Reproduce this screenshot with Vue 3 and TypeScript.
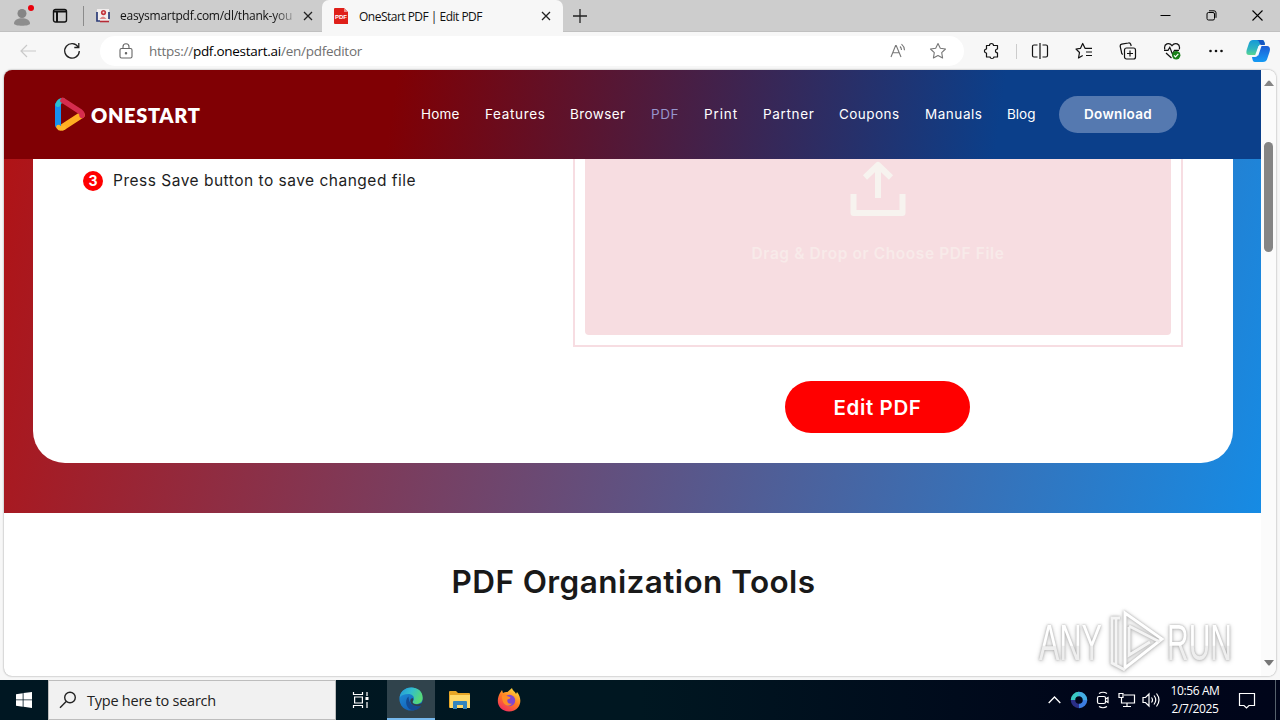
<script setup lang="ts">
import type { Directive } from 'vue'

// Tracks a line of text so that it fills the given width in pixels.
const vTrack: Directive<HTMLElement, number> = {
  mounted(el, { value }) {
    const natural = el.getBoundingClientRect().width
    const count = (el.textContent ?? '').length
    if (count > 0) el.style.letterSpacing = `${(value - natural) / count}px`
  },
}

interface NavItem {
  label: string
  width: number
  active?: boolean
}

const nav: NavItem[] = [
  { label: 'Home', width: 38.5 },
  { label: 'Features', width: 60.5 },
  { label: 'Browser', width: 55.5 },
  { label: 'PDF', width: 28, active: true },
  { label: 'Print', width: 34 },
  { label: 'Partner', width: 51.5 },
  { label: 'Coupons', width: 60.5 },
  { label: 'Manuals', width: 57.5 },
  { label: 'Blog', width: 28.5 },
]
</script>

<template>
  <div class="desktop">
    <div class="tabs">
      <div class="profile">
        <svg width="24" height="24" viewBox="0 0 24 24">
          <circle cx="11" cy="9.500" r="4.500" fill="#858585" />
          <path d="M3 19.500c0-7 16-7 16 0 0 3-16 3-16 0z" fill="#8d8d8d" />
          <circle cx="20" cy="4" r="3" fill="#e9000b" />
        </svg>
      </div>
      <svg class="workspace" width="16" height="16" viewBox="0 0 16 16" fill="none" stroke="#111" stroke-width="1.400">
        <rect x="1.500" y="1.500" width="13" height="12.500" rx="2" />
        <path d="M2 3.500h12M5 4v10" stroke-width="2" />
      </svg>
      <i class="tab-rule"></i>
      <div class="tab idle">
        <svg width="14" height="14" viewBox="0 0 14 14">
          <rect x="1" y="0" width="12" height="12" fill="#f2eeee" />
          <path d="M1 3v9h3M13 3v7" stroke="#2c3c78" stroke-width="1.700" fill="none" />
          <circle cx="7.500" cy="3.600" r="2.600" fill="#c3343c" />
          <circle cx="7.500" cy="3.400" r="1" fill="#f2d5d5" />
          <path d="M3.500 10q3.500-5 7 0" fill="#d88" />
          <path d="M4 12.500h9" stroke="#b52a35" stroke-width="1.600" />
        </svg>
        <span class="tab-text faded"><span v-track="172">easysmartpdf.com/dl/thank-you</span></span>
        <svg class="close" width="10" height="10" viewBox="0 0 10 10"><path d="M1 1l8 8M9 1l-8 8" stroke="#222" stroke-width="1.300" /></svg>
      </div>
      <div class="tab current">
        <svg width="14" height="16" viewBox="0 0 14 16">
          <path d="M1 0h9l4 4v12H1a1 1 0 0 1-1-1V1a1 1 0 0 1 1-1z" fill="#df1f19" />
          <path d="M10 0v4h4z" fill="#f08a85" />
          <text x="7" y="10.500" text-anchor="middle" font-family="Liberation Sans, sans-serif" font-size="6" font-weight="700" fill="#fff">PDF</text>
        </svg>
        <span class="tab-text"><span v-track="123">OneStart PDF | Edit PDF</span></span>
        <svg class="close" width="10" height="10" viewBox="0 0 10 10"><path d="M1 1l8 8M9 1l-8 8" stroke="#222" stroke-width="1.300" /></svg>
      </div>
      <svg class="plus" width="14" height="14" viewBox="0 0 14 14"><path d="M7 0v14M0 7h14" stroke="#222" stroke-width="1.300" /></svg>
      <div class="window-controls">
        <svg width="11" height="11" viewBox="0 0 11 11"><path d="M.5 5.500h10" stroke="#000" /></svg>
        <svg width="11" height="11" viewBox="0 0 11 11" fill="none" stroke="#000">
          <rect x="1" y="2.500" width="7.500" height="7.500" rx="1.500" />
          <path d="M3 .8h5a2 2 0 0 1 2 2v5" />
        </svg>
        <svg width="11" height="11" viewBox="0 0 11 11"><path d="M.5.5l10 10M10.500.5l-10 10" stroke="#000" stroke-width="1.100" /></svg>
      </div>
    </div>

    <div class="toolbar">
      <svg class="back" width="16" height="14" viewBox="0 0 16 14" fill="none" stroke="#c9c9c9" stroke-width="1.200"><path d="M7 1L1 7l6 6M1 7h15" /></svg>
      <svg class="reload" width="18" height="18" viewBox="0 0 18 18" fill="none" stroke="#222" stroke-width="1.300">
        <path d="M15.200 5A7.300 7.300 0 1 0 16.300 9M15.800 1v4.500h-4.500" />
      </svg>
      <div class="address">
        <svg class="lock" width="14" height="16" viewBox="0 0 14 16" fill="none" stroke="#666" stroke-width="1.100">
          <rect x="1" y="5.500" width="12" height="9.500" rx="1.500" />
          <path d="M4 5.500V3.700a3 3 0 0 1 6 0v1.800" />
          <circle cx="7" cy="10.200" r=".7" fill="#666" />
        </svg>
        <span class="url"><span v-track="213">https://<b>pdf.onestart.ai</b>/en/pdfeditor</span></span>
        <svg class="read" width="17" height="16" viewBox="0 0 17 16" fill="none" stroke="#777" stroke-width="1.100">
          <path d="M1 14L5.600 2.500h.6L11 14M2.800 9.800h6.500M10 3.500q1.500 1.500 1.500 3.500M11.500 1.200q3 2.500 3 6" />
        </svg>
        <svg width="18" height="18" viewBox="0 0 18 18" fill="none" stroke="#777" stroke-width="1.100" stroke-linejoin="round">
          <path d="M9 1.500l2.300 4.800 5.200.7-3.800 3.700.9 5.300L9 13.500 4.400 16l.9-5.300L1.500 7l5.200-.7z" />
        </svg>
      </div>
      <div class="actions">
        <svg width="18" height="18" viewBox="0 0 18 18" fill="none" stroke="#111" stroke-width="1.200" stroke-linejoin="round">
          <path d="M6.500 3.500C6.300.8 10.600.8 10.500 3.500H14.500V7C11.800 6.800 11.800 11 14.500 10.800V15H10.800C11 17 7 17 7.200 15H3.500V11C.8 11.200.8 6.900 3.500 7V3.500z" />
        </svg>
        <i class="rule"></i>
        <svg class="split" width="18" height="18" viewBox="0 0 18 18" fill="none" stroke="#111" stroke-width="1.200">
          <path d="M6.500 3H3a1.500 1.500 0 0 0-1.500 1.500v9A1.500 1.500 0 0 0 3 15h3.500M11.500 3H15a1.500 1.500 0 0 1 1.500 1.500v9A1.500 1.500 0 0 1 15 15h-3.500M9 1v16" />
        </svg>
        <svg width="18" height="18" viewBox="0 0 18 18" fill="none" stroke="#111" stroke-width="1.200" stroke-linejoin="round">
          <path d="M9.800 6.300H10L7.700 1.500 5.500 6.300 1 7l3.500 3.500-1 5.500 4.200-2.500M7.700 1.500L10 6.300h7M11 10h6M11 13.500h6" />
        </svg>
        <svg width="18" height="18" viewBox="0 0 18 18" fill="none" stroke="#111" stroke-width="1.200">
          <rect x="5.500" y="6" width="11" height="11" rx="2" />
          <path d="M11 8.500v6M8 11.500h6M3.800 12.500A2.500 2.500 0 0 1 2.500 10L1.200 4.500a2 2 0 0 1 1.500-2.300L9.300 1a2 2 0 0 1 2.400 1.300l.5 1.700" />
        </svg>
        <svg width="18" height="18" viewBox="0 0 18 18" fill="none" stroke="#111" stroke-width="1.200">
          <path d="M1.800 7.300C.5 1.500 6.200-.2 9 3.700 12-.3 17.600 1.700 16.300 7.300M1 8.300h4l1.800-3 2.700 7 2-4h4.500M3 11l5.500 5" />
          <circle cx="13.200" cy="13.200" r="4.200" fill="#198018" stroke="none" />
          <path d="M11 13.300l1.500 1.500 2.800-3" stroke="#fff" />
        </svg>
        <svg width="18" height="18" viewBox="0 0 18 18" fill="#111"><circle cx="3.500" cy="9" r="1.300" /><circle cx="9" cy="9" r="1.300" /><circle cx="14.500" cy="9" r="1.300" /></svg>
        <svg class="copilot" width="24" height="24" viewBox="0 0 24 24">
          <defs>
            <linearGradient id="cpA" x1="0" y1="0" x2="0" y2="1"><stop offset="0" stop-color="#1599d8" /><stop offset=".6" stop-color="#2fb5c0" /><stop offset="1" stop-color="#59d690" /></linearGradient>
            <linearGradient id="cpB" x1="0" y1="0" x2="0" y2="1"><stop offset="0" stop-color="#1b5dd6" /><stop offset="1" stop-color="#159bf4" /></linearGradient>
          </defs>
          <path d="M7 1h9c2 0 2.500 2 3 4h-3c-2 0-3 1-3.500 3L10 16H3c-3 0-3-3-2-6l2-6c.8-2 2-3 4-3z" fill="url(#cpA)" />
          <path d="M17 23H9c-2 0-2.500-2-3-5h3c2 0 2.500-1 3-3l2.500-8H21c3 0 3.500 3 2.500 6l-2 6c-.8 3-2.500 4-4.500 4z" fill="url(#cpB)" />
          <path d="M7 1h9c2 0 2.500 2 3 5h-4c-2-1-1-4-4-5z" fill="#1556c3" />
          <path d="M12.500 7h3l-3.200 9.500H9z" fill="#f5fbff" />
        </svg>
      </div>
    </div>

    <div class="browser-body">
      <div class="page">
        <header class="site-header">
          <div class="brand">
            <svg width="32" height="35" viewBox="0 0 32 35" fill="none" stroke-linecap="round" stroke-linejoin="round">
              <path d="M27.500 18L9 30" stroke="#ffad22" stroke-width="6.500" />
              <path d="M4 8v20" stroke="#168ff0" stroke-width="6" />
              <path d="M4 7.500Q5 3.500 9 3.500" stroke="#2bc0cf" stroke-width="5" />
              <path d="M4.500 30Q6 32.500 10 30.500" stroke="#ffb52b" stroke-width="4.500" />
              <path d="M9 3.500L26 14.500Q28.500 16.500 28 18.500" stroke="#d62c4e" stroke-width="5.500" />
              <path d="M7.500 9.500v16L21.500 17z" fill="#7b0004" />
            </svg>
            <span v-track="109.5">ONESTART</span>
          </div>
          <nav>
            <a v-for="item in nav" :key="item.label" :class="{ active: item.active }"><span v-track="item.width">{{ item.label }}</span></a>
          </nav>
          <button class="download"><span v-track="68">Download</span></button>
        </header>

        <section class="hero">
          <div class="card">
            <div class="steps">
              <span class="number">3</span>
              <span class="step-text"><span v-track="303">Press Save button to save changed file</span></span>
            </div>
            <div class="upload">
              <div class="drop-border">
                <div class="drop">
                  <svg width="56" height="56" viewBox="0 0 56 56" fill="none" stroke="#f7f3ef" stroke-width="6" stroke-linejoin="round">
                    <path d="M28 37V4M15 16.500L28 4l13 12.500" />
                    <path d="M3.500 33v19h49V33" />
                  </svg>
                  <p><span v-track="253">Drag &amp; Drop or Choose PDF File</span></p>
                </div>
              </div>
              <button class="edit"><span v-track="88">Edit PDF</span></button>
            </div>
          </div>
        </section>

        <section class="tools">
          <h2><span v-track="364">PDF Organization Tools</span></h2>
        </section>
      </div>
      <div class="scrollbar">
        <svg width="10" height="6" viewBox="0 0 10 6"><path d="M0 6l4-5q1-1 2 0l4 5z" fill="#858585" /></svg>
        <div class="thumb"></div>
        <svg class="down" width="10" height="6" viewBox="0 0 10 6"><path d="M0 0l4 5q1 1 2 0l4-5z" fill="#777" /></svg>
      </div>
    </div>

    <svg class="watermark" width="206" height="68" viewBox="0 0 206 68">
      <defs>
        <linearGradient id="fade" x1="0" y1="0" x2="0" y2="1"><stop offset=".54" stop-color="#fff" /><stop offset=".56" stop-color="#eee" /></linearGradient>
      </defs>
      <g fill="url(#fade)" font-family="Liberation Sans, sans-serif" font-size="50">
        <text x="1" y="51" textLength="63" lengthAdjust="spacingAndGlyphs">ANY</text>
        <text x="129" y="51" textLength="65" lengthAdjust="spacingAndGlyphs">RUN</text>
      </g>
      <g fill="none" stroke="#fff" stroke-width="3">
        <path d="M87 4l37 26-37 29z" />
        <path d="M82 9h-8v45l13 7M91 17l31 16M91 18v28l21-13M78 9v46" stroke="#f4f4f4" />
      </g>
    </svg>

    <footer class="taskbar">
      <div class="start">
        <svg width="16" height="16" viewBox="0 0 16 16" fill="#fff"><path d="M0 2.200l6.700-1v6.300H0zM7.500 1.100L16 0v7.500H7.500zM0 8.300h6.700v6.400L0 13.800zM7.500 8.300H16V16l-8.500-1.200z" /></svg>
      </div>
      <div class="search">
        <svg width="18" height="18" viewBox="0 0 18 18" fill="none" stroke="#222" stroke-width="1.400"><circle cx="11" cy="6.500" r="5.300" /><path d="M7.200 10.500L1 16.700" /></svg>
        <span v-track="129">Type here to search</span>
      </div>
      <div class="task">
        <svg width="18" height="18" viewBox="0 0 18 18" fill="none" stroke="#fff" stroke-width="1.200">
          <path d="M1.500 1v2.500h9V1M1.500 17v-2.500h9V17M2.600 6h7.800v6H2.600zM15 1v4M15 11v6" />
          <rect x="13.500" y="6" width="3" height="3" fill="#fff" stroke="none" />
        </svg>
      </div>
      <div class="task edge">
        <svg width="24" height="24" viewBox="0 0 24 24">
          <defs>
            <linearGradient id="edgeTop" x1="0" y1="0" x2="1" y2=".4"><stop offset="0" stop-color="#2495d7" /><stop offset=".5" stop-color="#32bdce" /><stop offset="1" stop-color="#56d978" /></linearGradient>
            <linearGradient id="edgeSide" x1="0" y1="0" x2=".7" y2="1"><stop offset="0" stop-color="#2195db" /><stop offset="1" stop-color="#115ab4" /></linearGradient>
          </defs>
          <circle cx="12" cy="12" r="11.600" fill="url(#edgeSide)" />
          <path d="M.7 10.500C2.500-3 23.700-2.500 23.700 11c0 4.500-3.400 6-6.700 6-3 0-4.200-1.300-3-2.800 2.500-3 0-7.200-4.500-7.200C5 7 2 8.500.7 10.500z" fill="url(#edgeTop)" />
          <path d="M9.500 9.500C4.500 14 8 23 14 23.300c4 .1 7-2.500 8.300-4.800-4.300 1.800-12.600 1-12.800-9z" fill="#144b93" />
          <path d="M13.500 11c2 2.500-.8 3 .5 5.100 2.300 2.500 7 1.200 9 0l-.7 2.400c-4.800 1.900-10.700-.1-11-4.500 0-1.500.8-2.700 2.200-3z" fill="#303f49" />
        </svg>
      </div>
      <div class="task">
        <svg width="22" height="20" viewBox="0 0 22 20">
          <path d="M0 2a1 1 0 0 1 1-1h6l2 2h11a1 1 0 0 1 1 1v14H1a1 1 0 0 1-1-1z" fill="#e7a626" />
          <path d="M1 5h20v13H1z" fill="#ffd969" />
          <path d="M4 19v-7a1 1 0 0 1 1-1h12a1 1 0 0 1 1 1v7h-4v-4H8v4z" fill="#3485bd" />
        </svg>
      </div>
      <div class="task">
        <svg width="24" height="24" viewBox="0 0 24 24">
          <defs><linearGradient id="fox" x1=".8" y1="0" x2=".2" y2="1"><stop offset="0" stop-color="#ffe23d" /><stop offset=".5" stop-color="#ff7b23" /><stop offset="1" stop-color="#f12762" /></linearGradient></defs>
          <path d="M3 5l2-3 1 3c1.500-1 3-1.300 4.500-1L15 0c.5 3 3.500 3.500 4 6l1-2c4 5 4.500 11 1 15.500-4 5-13 5.300-17.500.5C-.5 15.500.5 9.500 3 5z" fill="url(#fox)" />
          <circle cx="12.500" cy="12.500" r="5.700" fill="#8047cf" />
          <path d="M5 7.500c3-1 5 1 8 1.500 1 1-.5 2-2.500 2.500-1 3 1.500 5 4.500 4-4 5-10.500 1-10-8z" fill="#ff8d25" />
        </svg>
      </div>
      <div class="tray">
        <svg width="13" height="8" viewBox="0 0 13 8" fill="none" stroke="#fff" stroke-width="1.300"><path d="M.7 7l5.800-6 5.800 6" /></svg>
        <svg class="ring" width="18" height="18" viewBox="0 0 18 18" fill="none" stroke-width="4.500">
          <path d="M15 9a6 6 0 0 1-6 6" stroke="#3b7ce0" />
          <path d="M9 15a6 6 0 0 1-6-6" stroke="#2b2f87" />
          <path d="M3 9a6 6 0 0 1 6-6" stroke="#3ac9c4" />
          <path d="M8.500 3A6 6 0 0 1 15 9.200" stroke="#44aee4" />
        </svg>
        <svg class="meet" width="14" height="18" viewBox="0 0 14 18" fill="none" stroke="#fff" stroke-width="1.200">
          <rect x="1.500" y="5.500" width="8" height="7" rx="1.500" /><path d="M9.500 8l2.500-1.500v5L9.500 10M3 2.500q4-2.500 8 0M3 15.500q4 2.500 8 0" />
        </svg>
        <svg class="network" width="18" height="16" viewBox="0 0 18 16" fill="none" stroke="#fff" stroke-width="1.200">
          <path d="M6 3h10.500v8H3.500V6M9 11v3M5 14.500h8M1 1.500h4v4H1z" />
        </svg>
        <svg class="sound" width="18" height="16" viewBox="0 0 18 16" fill="none" stroke="#fff" stroke-width="1.200">
          <path d="M1 5.500h2.500L7 2v12l-3.500-3.500H1zM9.500 5.500q2 2.500 0 5M12 3.500q3.500 4.500 0 9M14.500 1.500q5 6.500 0 13" />
        </svg>
        <div class="clock"><div><span v-track="49">10:56 AM</span></div><div><span v-track="47">2/7/2025</span></div></div>
        <svg class="notice" width="18" height="17" viewBox="0 0 18 17" fill="none" stroke="#fff" stroke-width="1.200"><path d="M1.500 1.500h15v12H11l-2.500 2.500L6 13.500H1.500z" /></svg>
      </div>
    </footer>
  </div>
</template>

<style>
body { margin: 0; overflow: hidden; }
</style>

<style scoped>
* { box-sizing: border-box; }
svg { display: block; flex: none; }
span { white-space: pre; }
button { border: 0; padding: 0; }
.desktop { position: relative; width: 1280px; height: 720px; background: #f7f7f7; display: flex; flex-direction: column; overflow: hidden; font-family: "Open Sans", "Noto Sans", sans-serif; color: #111; }
.tabs { height: 32px; flex: none; background: #cdcdcd; display: flex; align-items: center; border-bottom: 1px solid #c0c0c0; }
.profile { width: 26px; margin-left: 11px; }
.workspace { margin-left: 15px; }
.tab-rule { width: 1px; height: 20px; background: #8b8b8b; margin-left: 15px; }
.tab { display: flex; align-items: center; font-size: 12px; }
.tab.idle { width: 238px; padding-left: 12px; }
.tab-text { display: block; overflow: hidden; }
.idle .tab-text { margin-left: 10px; width: 174px; }
.tab-text.faded { -webkit-mask-image: linear-gradient(90deg, #000 88%, #0003); mask-image: linear-gradient(90deg, #000 88%, #0003); }
.idle .close { margin-left: 9px; }
.tab.current { height: 32px; width: 241px; align-self: flex-start; background: #f7f7f7; border-radius: 7px 7px 0 0; padding-left: 12px; }
.current .tab-text { margin-left: 11px; width: 182px; }
.plus { margin-left: 10px; }
.window-controls { margin-left: auto; margin-right: 17px; display: flex; gap: 35px; }
.toolbar { height: 38px; flex: none; display: flex; align-items: center; background: #f7f7f7; }
.back { margin-left: 20px; }
.reload { margin-left: 27px; }
.address { width: 864px; height: 30px; margin-left: 19px; border-radius: 15px; background: #fff; display: flex; align-items: center; padding: 0 17px 0 19px; }
.url { margin-left: 16px; font-size: 13.5px; color: #707070; }
.url b { font-weight: 400; color: #000; }
.read { margin-left: auto; margin-right: 22px; }
.actions { display: flex; align-items: center; margin-left: 19px; gap: 26px; }
.rule { width: 1px; height: 15px; background: #ccc; margin: 0 -12px 0 -11px; }
.copilot { margin-left: -5px; }
.browser-body { height: 606px; flex: none; margin: 0 4px 0 4px; display: flex; background: #fff; border-radius: 8px; overflow: hidden; box-shadow: 0 0 2px #888; }
.page { width: 1257px; flex: none; font-family: Inter, "Noto Sans", sans-serif; }
.site-header { height: 89px; padding-left: 50px; display: flex; align-items: center; color: #fff; background: linear-gradient(98deg, #800004 0, #800004 31%, #0b3f8a 79%, #0b3f8a 100%); }
.brand { display: flex; align-items: center; width: 367px; gap: 5px; font-family: Lato, sans-serif; font-weight: 800; font-size: 20px; line-height: 24px; }
nav { display: grid; grid-template-columns: 64px 85px 81px 53px 59px 76px 86px 82px 52px; font-size: 13.5px; padding-bottom: 1px; }
nav .active { color: #9794cc; }
.download { width: 118px; height: 37px; border-radius: 19px; background: #5579b0; color: #fff; font: 600 13.5px Inter, sans-serif; padding-bottom: 1px; }
.hero { height: 354px; padding: 0 28px 50px 29px; background: linear-gradient(102deg, #b01316 0, #168be4 100%); }
.card { height: 304px; background: #fff; border-radius: 0 0 32px 32px; display: grid; grid-template-columns: 540px 610px; }
.steps { display: flex; align-items: center; height: 20px; margin: 12px 0 0 50px; }
.number { width: 20px; height: 20px; border-radius: 50%; background: #f00; color: #fff; font-weight: 700; font-size: 14px; line-height: 20px; text-align: center; }
.step-text { margin-left: 10px; font-size: 15.5px; line-height: 20px; padding-bottom: 1px; color: #1d1d1d; }
.upload { display: flex; flex-direction: column; align-items: center; }
.drop-border { width: 610px; height: 188px; border: 2px solid #f7dde2; border-top: 0; padding: 0 10px 10px; }
.drop { height: 176px; border-radius: 0 0 4px 4px; background: #f7dde1; display: flex; flex-direction: column; align-items: center; padding-top: 2px; }
.drop p { margin: 26px 0 0; font-size: 15.5px; line-height: 22px; font-weight: 600; color: #f8eae9; }
.edit { width: 185px; height: 52px; margin: 34px 1px 0 0; border-radius: 26px; background: #f00; color: #fff; font: 600 20.5px Inter, sans-serif; }
.tools { height: 164px; padding-top: 49px; text-align: center; }
h2 { margin: 0 0 0 2px; font-size: 31.5px; line-height: 40px; font-weight: 600; color: #191919; }
.scrollbar { width: 15px; background: #fbfbfb; display: flex; flex-direction: column; align-items: center; padding: 10px 0; }
.thumb { width: 9px; height: 110px; margin-top: 56px; border-radius: 5px; background: #858585; }
.down { margin-top: auto; }
.watermark { position: absolute; left: 1038px; top: 609px; overflow: visible; filter: drop-shadow(0 0 1px #aaa) drop-shadow(0 1px 2px #ccc); }
.taskbar { height: 40px; margin-top: 4px; flex: none; display: flex; color: #fff; background: linear-gradient(90deg, #001722 0, #001721 50%, #00061a 85%, #00051a 100%); }
.start { width: 48px; display: flex; align-items: center; justify-content: center; }
.search { width: 288px; background: #f1f1f1; border: 1px solid #bdbdbd; display: flex; align-items: center; padding-left: 10px; color: #222; font-size: 14.5px; }
.search > span { margin-left: 10px; }
.task { width: 49px; display: flex; align-items: center; justify-content: center; }
.task:nth-child(3) { width: 51px; padding-right: 2px; }
.task.edge { width: 48px; background: #30434c; border-bottom: 2px solid #76b9ed; }
.tray { margin-left: auto; display: flex; align-items: center; width: 228px; border-right: 1px solid #56616c; margin-right: 4px; }
.tray .ring { margin-left: 9px; }
.tray .meet { margin-left: 8px; }
.tray .network { margin-left: 8px; }
.tray .sound { margin-left: 6px; }
.clock { width: 56px; margin-left: 7px; font-size: 12px; line-height: 18px; text-align: center; }
.notice { margin-left: 15px; margin-top: 1px; }
</style>
